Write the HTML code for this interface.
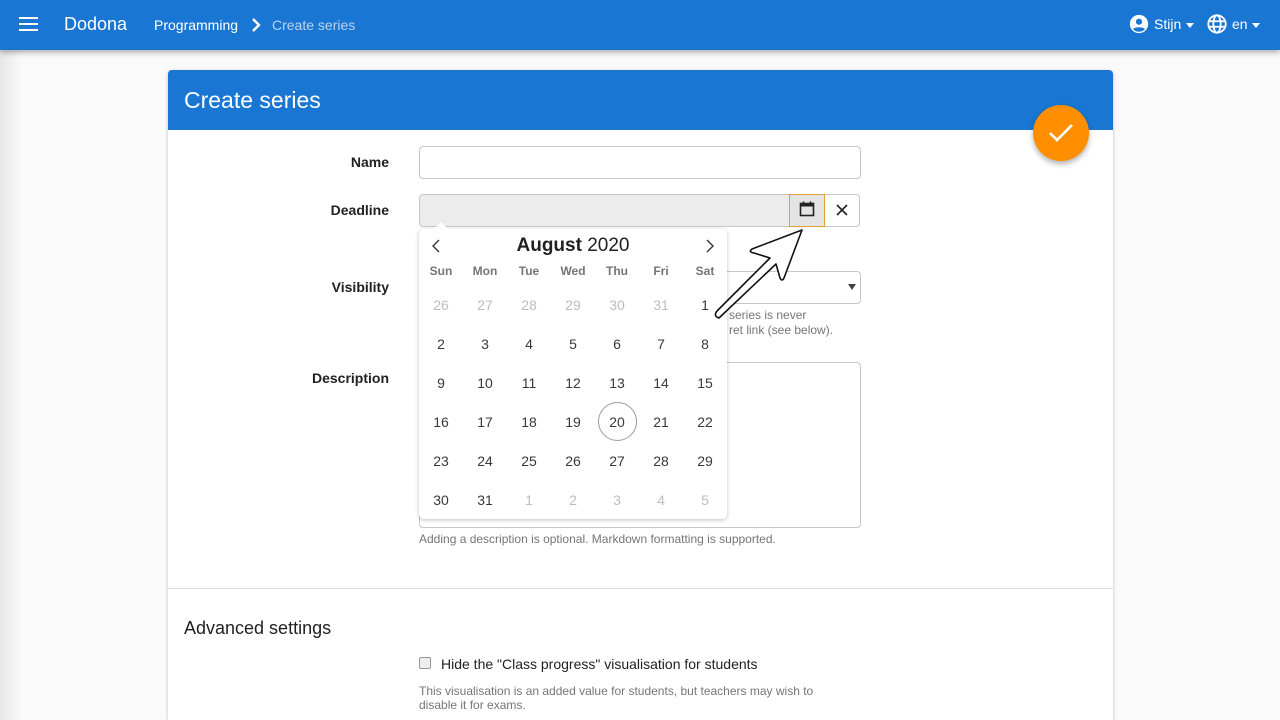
<!DOCTYPE html>
<html style="overflow:hidden;height:720px"><head><meta charset="utf-8"><style>
*{box-sizing:border-box;margin:0;padding:0}
body{width:1280px;height:720px;overflow:hidden;background:#fafafa;font-family:"Liberation Sans",sans-serif;position:relative;color:#212121}
.a{position:absolute}
.nav{left:0;top:0;width:1280px;height:50px;background:#1976d2;box-shadow:0 2px 6px rgba(0,0,0,.35);color:#fff;z-index:5}
.card{left:168px;top:70px;width:945px;height:650px;background:#fff;border-radius:4px 4px 0 0;box-shadow:0 1px 3px rgba(0,0,0,.25);overflow:hidden}
.lbl{font-weight:bold;font-size:14px;text-align:right;width:200px;left:189px}
.inp{border:1px solid #c8c8c8;border-radius:4px;background:#fff}
.help{font-size:12px;color:#757575}
.cal{left:419px;top:229px;width:308px;height:290px;background:#fff;border-radius:5px;box-shadow:0 1px 4px rgba(0,0,0,.25);z-index:3}
.d{position:absolute;width:40px;text-align:center;font-size:14px;color:#393939;line-height:20px}
.g{color:#bdbdbd}
.w{position:absolute;width:40px;text-align:center;font-size:12px;font-weight:bold;color:#757575}
</style></head><body>
<div class="a" style="left:0;top:50px;width:22px;height:670px;background:linear-gradient(90deg,rgba(0,0,0,.08),rgba(0,0,0,0))"></div>
<div class="a nav">
 <div class="a" style="left:19px;top:17px;width:19px;height:2px;background:#fff;box-shadow:0 6px 0 #fff,0 12px 0 #fff"></div>
 <div class="a" style="left:64px;top:14px;font-size:18px">Dodona</div>
 <div class="a" style="left:154px;top:17px;font-size:14px">Programming</div>
 <svg class="a" style="left:249px;top:16px" width="14" height="18" viewBox="0 0 14 18"><path d="M4 3l6 6-6 6" stroke="#fff" stroke-width="2.4" fill="none"/></svg>
 <div class="a" style="left:272px;top:17px;font-size:14px;color:#bbd3f0">Create series</div>
 <svg class="a" style="left:1128px;top:13px" width="22" height="22" viewBox="0 0 24 24"><circle cx="12" cy="12" r="10" fill="#fff"/><circle cx="12" cy="9.5" r="3.4" fill="#1976d2"/><path d="M5.5 17.5c2-2.6 11-2.6 13 0c-1.6 2-3.8 3-6.5 3s-4.9-1-6.5-3z" fill="#1976d2"/></svg>
 <div class="a" style="left:1154px;top:16px;font-size:14px">Stijn</div>
 <div class="a" style="left:1186px;top:23px;border:4px solid transparent;border-top:5px solid #fff"></div>
 <svg class="a" style="left:1206px;top:13px" width="22" height="22" viewBox="0 0 24 24" fill="none" stroke="#fff" stroke-width="2"><circle cx="12" cy="12" r="9.5"/><ellipse cx="12" cy="12" rx="4" ry="9.5"/><path d="M2.5 9h19M2.5 15h19"/></svg>
 <div class="a" style="left:1232px;top:16px;font-size:14px">en</div>
 <div class="a" style="left:1252px;top:23px;border:4px solid transparent;border-top:5px solid #fff"></div>
</div>
<div class="a card">
 <div class="a" style="left:0;top:0;width:945px;height:60px;background:#1976d2"></div>
 <div class="a" style="left:16px;top:17px;font-size:23px;color:#fff">Create series</div>
 <div class="a" style="left:0;top:518px;width:945px;height:1px;background:#e0e0e0"></div>
 <div class="a" style="left:16px;top:548px;font-size:18px;color:#212121">Advanced settings</div>
</div>
<div class="a" style="left:1033px;top:105px;width:56px;height:56px;border-radius:50%;background:#ff8f00;box-shadow:0 3px 6px rgba(0,0,0,.3);z-index:4"></div>
<svg class="a" style="left:1047px;top:119px;z-index:4" width="28" height="28" viewBox="0 0 28 28"><path d="M3 14l7 7L25 6" stroke="#fff" stroke-width="2.6" fill="none"/></svg>
<div class="a lbl" style="top:154px">Name</div>
<div class="a inp" style="left:419px;top:146px;width:442px;height:33px"></div>
<div class="a lbl" style="top:202px">Deadline</div>
<div class="a inp" style="left:419px;top:194px;width:441px;height:33px;background:#ececec"></div>
<div class="a" style="left:789px;top:194px;width:36px;height:33px;border:1px solid #e0a030;background:#e4e4e4"></div>
<svg class="a" style="left:799px;top:201px" width="16" height="16" viewBox="0 0 16 16"><rect x="1.5" y="2.5" width="13" height="12" fill="none" stroke="#222" stroke-width="1.6"/><rect x="1.5" y="2.5" width="13" height="3" fill="#222"/><path d="M4.5 0.5v3M11.5 0.5v3" stroke="#222" stroke-width="1.6"/></svg>
<div class="a" style="left:825px;top:194px;width:35px;height:33px;border:1px solid #c8c8c8;border-left:none;border-radius:0 4px 4px 0;background:#fff"></div>
<svg class="a" style="left:836px;top:204px" width="12" height="12" viewBox="0 0 12 12"><path d="M1 1l10 10M11 1L1 11" stroke="#222" stroke-width="1.6"/></svg>
<div class="a lbl" style="top:279px">Visibility</div>
<div class="a inp" style="left:419px;top:271px;width:442px;height:33px"></div>
<div class="a" style="left:848px;top:284px;border:4px solid transparent;border-top:6px solid #444"></div>
<div class="a help" style="left:729px;top:308px;line-height:15px">series is never<br>ret link (see below).</div>
<div class="a lbl" style="top:370px">Description</div>
<div class="a inp" style="left:419px;top:362px;width:442px;height:166px"></div>
<div class="a help" style="left:419px;top:532px">Adding a description is optional. Markdown formatting is supported.</div>
<div class="a" style="left:419px;top:657px;width:12px;height:12px;border:1px solid #999;border-radius:2px;background:#eee"></div>
<div class="a" style="left:441px;top:656px;font-size:14px">Hide the "Class progress" visualisation for students</div>
<div class="a help" style="left:419px;top:684px;line-height:14px">This visualisation is an added value for students, but teachers may wish to<br>disable it for exams.</div>
<div class="a" style="left:434px;top:222px;border:7px solid transparent;border-bottom:7px solid #fff;border-top:none;z-index:4"></div>
<div class="a cal">
 <svg class="a" style="left:10px;top:10px" width="14" height="14" viewBox="0 0 14 14"><path d="M10 1L4 7l6 6" stroke="#333" stroke-width="1.4" fill="none"/></svg>
 <svg class="a" style="left:284px;top:10px" width="14" height="14" viewBox="0 0 14 14"><path d="M4 1l6 6-6 6" stroke="#333" stroke-width="1.4" fill="none"/></svg>
 <div class="a" style="left:0;width:308px;top:6px;text-align:center;font-size:19px;color:#212121"><b>August</b> 2020</div>
</div>
<svg class="a" style="left:0;top:0;z-index:6" width="1280" height="720"><path d="M802 230L752 249Q748 252 754 253L770 258L717 311Q713 316 719 318L776 264L780 278Q782 282 784 278Z" fill="#fff" stroke="#111" stroke-width="1.6" stroke-linejoin="round"/></svg>
<script>
var c=document.querySelector('.cal'),h='';
var ws=['Sun','Mon','Tue','Wed','Thu','Fri','Sat'];
for(var i=0;i<7;i++)h+='<div class="w" style="left:'+(2+44*i)+'px;top:35px">'+ws[i]+'</div>';
var days=[26,27,28,29,30,31];for(var i=1;i<=31;i++)days.push(i);for(var i=1;i<=5;i++)days.push(i);
for(var k=0;k<42;k++){var r=Math.floor(k/7),col=k%7,gr=(k<6||k>36);
h+='<div class="d'+(gr?' g':'')+'" style="left:'+(2+44*col)+'px;top:'+(66+39*r)+'px">'+days[k]+'</div>';}
h+='<div class="a" style="left:179px;top:173px;width:39px;height:39px;border:1px solid #959ea9;border-radius:50%"></div>';
c.insertAdjacentHTML('beforeend',h);
</script>
</body></html>
